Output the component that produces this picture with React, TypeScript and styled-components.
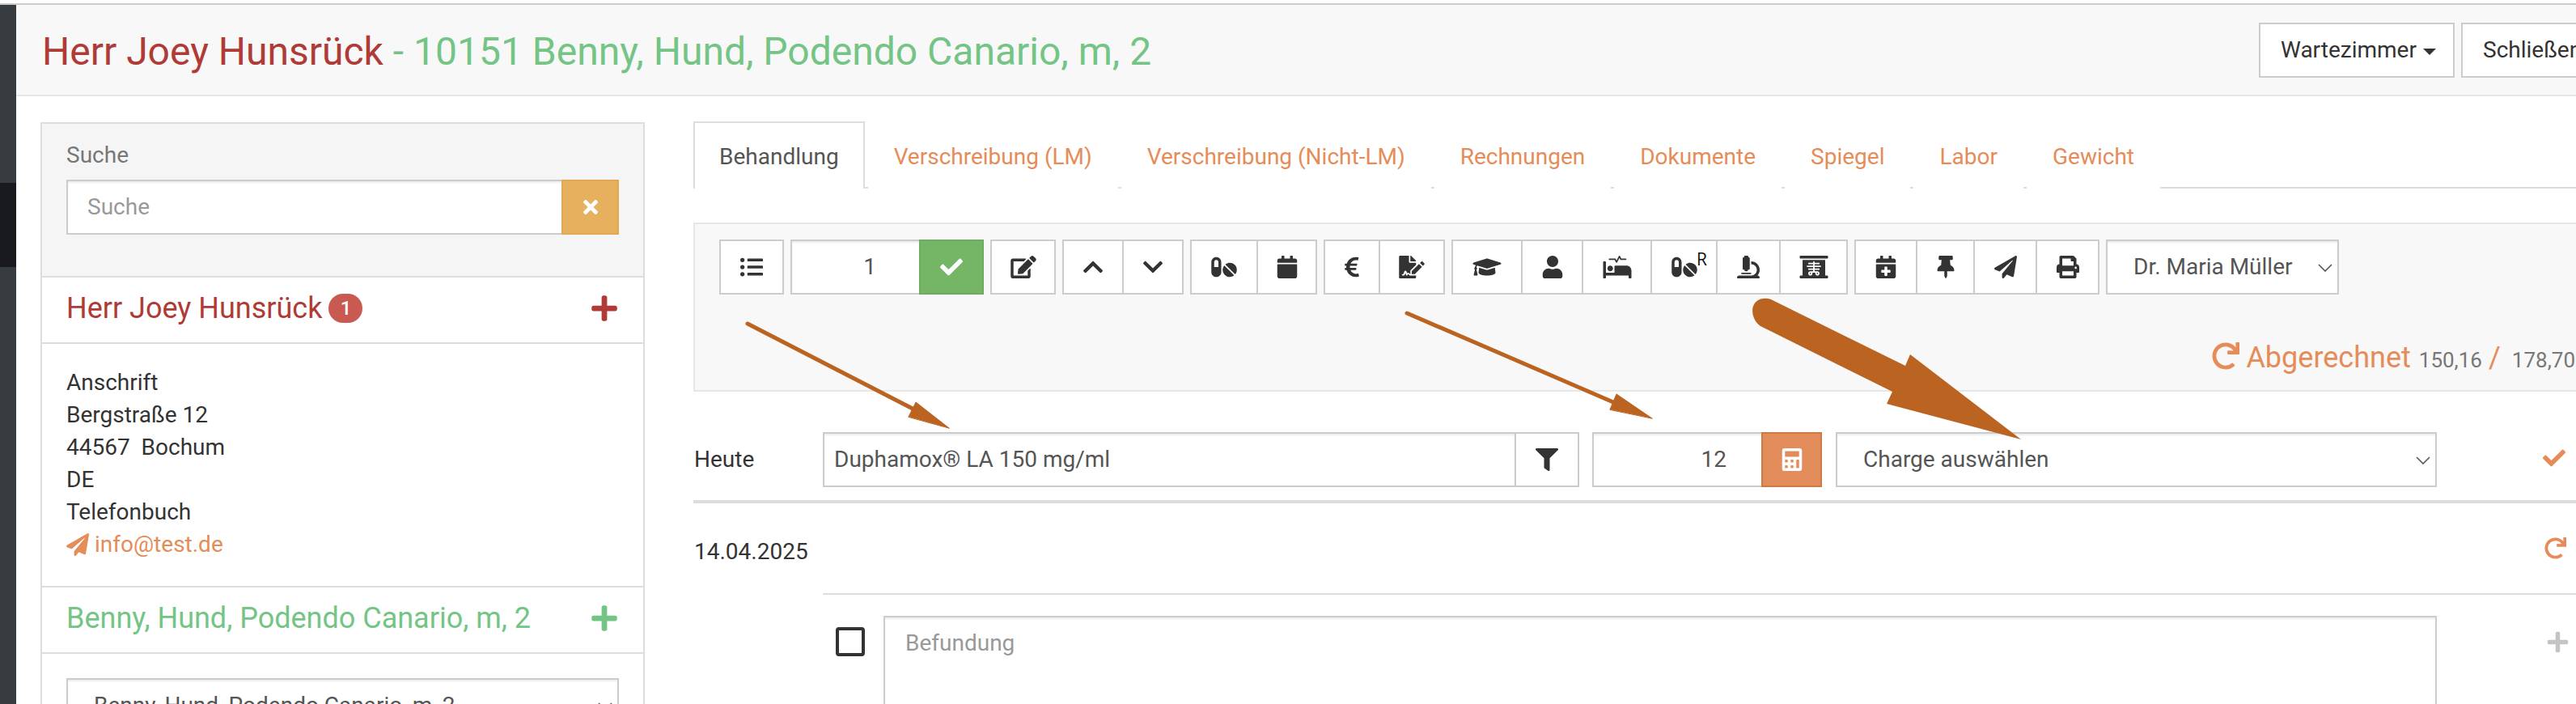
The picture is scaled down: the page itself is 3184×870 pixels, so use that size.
import styled, { createGlobalStyle } from "styled-components";
import {
  FaCalculator,
  FaCalendar,
  FaCalendarPlus,
  FaCheck,
  FaChevronDown,
  FaChevronUp,
  FaEdit,
  FaEuroSign,
  FaFileSignature,
  FaFilter,
  FaGraduationCap,
  FaListUl,
  FaMicroscope,
  FaPaperPlane,
  FaPills,
  FaPlus,
  FaPrint,
  FaProcedures,
  FaRedo,
  FaThumbtack,
  FaTimes,
  FaUser,
  FaXRay,
} from "react-icons/fa";

const ORANGE = "#e58c58";
const RED = "#b03a36";
const GREEN = "#74c585";

const GlobalStyle = createGlobalStyle`
  html, body {
    margin: 0;
    padding: 0;
    width: 3184px;
    height: 870px;
    overflow: hidden;
    background: #fff;
  }
  body {
    font-family: Roboto, "Liberation Sans", sans-serif;
    font-size: 28px;
    line-height: 40px;
    color: #333;
  }
  * {
    box-sizing: border-box;
  }
`;

const Page = styled.div`
  position: relative;
  width: 3184px;
  height: 870px;
  padding-top: 4px;
  overflow: hidden;
`;

const Frame = styled.div`
  display: flex;
  height: 866px;
  border-top: 2px solid #ccc;
`;

const Rail = styled.div`
  flex: 0 0 20px;
  display: flex;
  flex-direction: column;
  background: #363c40;
`;

const RailActive = styled.div`
  height: 104px;
  margin-top: 220px;
  background: #181a1e;
`;

const Content = styled.div`
  flex: 1;
  min-width: 0;
`;

const Header = styled.header`
  display: flex;
  justify-content: space-between;
  height: 113px;
  padding: 22px 0 0 32px;
  background: #f8f8f8;
  border-bottom: 2px solid #e7e7e7;
`;

const Title = styled.h1`
  margin: 0;
  padding-top: 5px;
  font-size: 48px;
  line-height: 62px;
  font-weight: 400;
  white-space: nowrap;
  color: ${GREEN};
`;

const TitleOwner = styled.span`
  color: ${RED};
`;

const HeaderActions = styled.div`
  display: flex;
  gap: 8px;
  flex: 0 0 392px;
  overflow: hidden;
`;

const HeaderButton = styled.div<{ $w: number }>`
  flex: 0 0 ${(p) => p.$w}px;
  height: 68px;
  display: flex;
  align-items: center;
  gap: 8px;
  padding-left: 25px;
  background: #fff;
  border: 2px solid #ccc;
  white-space: nowrap;
`;

const Caret = styled.span`
  width: 0;
  height: 0;
  margin-top: 4px;
  border-top: 8px solid #333;
  border-left: 8px solid transparent;
  border-right: 8px solid transparent;
`;

const Columns = styled.div`
  display: flex;
  padding: 32px 0 0 30px;
`;

const LeftPanel = styled.aside`
  flex: 0 0 747px;
  height: 760px;
  border: 2px solid #ddd;
`;

const SearchBox = styled.div`
  height: 190px;
  padding: 19px 30px 0;
  background: #f5f5f5;
  border-bottom: 2px solid #ddd;
`;

const SearchLabel = styled.div`
  height: 50px;
  color: #777;
`;

const InputGroup = styled.div`
  display: flex;
`;

const SearchInput = styled.div`
  flex: 1;
  height: 68px;
  padding: 12px 24px;
  color: #999;
  background: #fff;
  border: 2px solid #ccc;
  border-right: 0;
  box-shadow: inset 0 2px 2px rgba(0, 0, 0, 0.075);
`;

const SearchClear = styled.div`
  flex: 0 0 71px;
  display: flex;
  align-items: center;
  justify-content: center;
  color: #fff;
  background: #e7b05e;
  border: 2px solid #e4a854;
  svg {
    height: 26px;
    width: 36px;
  }
`;

const PanelHead = styled.div<{ $color: string }>`
  height: 82px;
  display: flex;
  align-items: center;
  justify-content: space-between;
  padding: 0 30px 4px;
  font-size: 36px;
  color: ${(p) => p.$color};
  border-bottom: 2px solid #ddd;
  svg {
    height: 36px;
    width: 36px;
  }
`;

const PanelName = styled.div`
  display: flex;
  align-items: center;
  gap: 8px;
`;

const Badge = styled.span`
  width: 42px;
  height: 36px;
  display: flex;
  align-items: center;
  justify-content: center;
  font-size: 24px;
  font-weight: 500;
  color: #fff;
  background: #c95a52;
  border-radius: 20px;
`;

const Address = styled.div`
  height: 301px;
  padding: 28px 30px 0;
  border-bottom: 2px solid #ddd;
`;

const MailLink = styled.div`
  display: flex;
  align-items: center;
  gap: 7px;
  color: ${ORANGE};
  svg {
    height: 28px;
    width: 28px;
  }
`;

const PatientBody = styled.div`
  padding: 30px 30px 0;
`;

const Select = styled.div<{ $pad?: number }>`
  flex: 1;
  position: relative;
  height: 68px;
  padding: 12px 0 0 ${(p) => p.$pad ?? 32}px;
  color: #555;
  background: #fff;
  border: 2px solid #ccc;
  box-shadow: inset 0 2px 2px rgba(0, 0, 0, 0.075);
  white-space: nowrap;
`;

const DoctorSelect = styled(Select)`
  flex: 0 0 288px;
`;

const SelectChevron = styled.svg`
  position: absolute;
  right: 6px;
  top: 28px;
  width: 18px;
  height: 10px;
  fill: none;
  stroke: #555;
  stroke-width: 1.6;
`;

const Arrow = () => (
  <SelectChevron viewBox="0 0 18 10">
    <path d="M1 1l8 8 8-8" />
  </SelectChevron>
);

const RightColumn = styled.main`
  flex: 0 0 2400px;
  margin-left: 60px;
`;

const Tabs = styled.nav`
  display: flex;
  height: 83px;
  margin-top: -1px;
  border-bottom: 2px solid #ddd;
`;

const Tab = styled.div<{ $active?: boolean }>`
  height: 83px;
  margin-right: 4px;
  padding: 22px 30px 0;
  white-space: nowrap;
  color: ${(p) => (p.$active ? "#555" : ORANGE)};
  background: #fff;
  border: 2px solid ${(p) => (p.$active ? "#ddd" : "transparent")};
  border-bottom: 0;
`;

const ToolPanel = styled.section`
  height: 209px;
  margin-top: 42px;
  padding: 19px 30px 0;
  background: #f8f8f8;
  border: 2px solid #e7e7e7;
`;

const Toolbar = styled.div`
  display: flex;
  gap: 8px;
`;

const Group = styled.div`
  display: flex;
  & > * + * {
    margin-left: -2px;
  }
`;

const ToolButton = styled.div<{ $w: number }>`
  position: relative;
  flex: 0 0 ${(p) => p.$w}px;
  height: 68px;
  display: flex;
  align-items: center;
  justify-content: center;
  color: #333;
  background: #fff;
  border: 2px solid #ccc;
  svg {
    height: 28px;
    width: 42px;
  }
`;

const FilterButton = styled(ToolButton)`
  margin-left: -2px;
`;

const Superscript = styled.span`
  position: absolute;
  left: 55px;
  top: 10px;
  font-family: "Open Sans", sans-serif;
  font-size: 21px;
  line-height: 24px;
  color: #111;
`;

const CountField = styled.div`
  flex: 0 0 161px;
  height: 68px;
  padding: 12px 53px 0 0;
  text-align: right;
  color: #555;
  background: #fff;
  border: 2px solid #ccc;
  box-shadow: inset 0 2px 2px rgba(0, 0, 0, 0.075);
`;

const ColorButton = styled.div<{ $bg: string; $line: string; $w: number }>`
  flex: 0 0 ${(p) => p.$w}px;
  height: 68px;
  display: flex;
  align-items: center;
  justify-content: center;
  color: #fff;
  background: ${(p) => p.$bg};
  border: 2px solid ${(p) => p.$line};
  svg {
    height: 28px;
    width: 42px;
  }
`;

const Amount = styled.div`
  display: flex;
  justify-content: flex-end;
  align-items: baseline;
  height: 50px;
  margin-top: 56px;
  padding-right: 42px;
  font-size: 26px;
  white-space: nowrap;
  color: #777;
`;

const AmountState = styled.span`
  display: flex;
  align-items: baseline;
  gap: 8px;
  margin-right: 10px;
  font-size: 36px;
  color: ${ORANGE};
  svg {
    height: 34px;
    width: 34px;
    transform: translateY(3px);
  }
`;

const AmountSlash = styled.span`
  margin: 0 14px 0 8px;
  font-size: 36px;
  color: ${ORANGE};
`;

const EntryRow = styled.div`
  display: flex;
  align-items: center;
  height: 68px;
  margin-top: 50px;
`;

const RowLabel = styled.div`
  flex: 0 0 160px;
  padding-left: 1px;
`;

const ProductField = styled.div`
  flex: 0 0 857px;
  height: 68px;
  padding: 12px 12px;
  color: #555;
  background: #fff;
  border: 2px solid #ccc;
  box-shadow: inset 0 2px 2px rgba(0, 0, 0, 0.075);
`;

const AmountField = styled.div`
  flex: 0 0 209px;
  height: 68px;
  margin-left: 16px;
  padding: 12px 43px 0 0;
  text-align: right;
  color: #555;
  background: #fff;
  border: 2px solid #ccc;
  border-right: 0;
  box-shadow: inset 0 2px 2px rgba(0, 0, 0, 0.075);
`;

const ChargeSlot = styled.div`
  flex: 0 0 743px;
  display: flex;
  margin-left: 17px;
`;

const RowIcon = styled.div<{ $color: string; $h: number; $left: number }>`
  margin-left: ${(p) => p.$left}px;
  color: ${(p) => p.$color};
  display: flex;
  svg {
    height: ${(p) => p.$h}px;
    width: ${(p) => p.$h}px;
  }
`;

const EntryCheck = styled(RowIcon)`
  margin-bottom: 4px;
`;

const ThickRule = styled.hr`
  height: 4px;
  margin: 16px 0 0;
  background: #ddd;
  border: 0;
`;

const DateRow = styled.div`
  display: flex;
`;

const DateBody = styled.div`
  flex: 1;
  height: 113px;
  display: flex;
  align-items: center;
  padding-left: 2128px;
  border-bottom: 2px solid #ddd;
`;

const DateLabel = styled(RowLabel)`
  padding-top: 40px;
`;

const NoteRow = styled.div`
  display: flex;
  align-items: flex-start;
  margin: 26px 0 0 160px;
`;

const CheckBox = styled.div`
  flex: 0 0 36px;
  height: 36px;
  margin: 14px 23px 0 16px;
  border: 4px solid #333;
  border-radius: 4px;
`;

const NoteArea = styled.div`
  flex: 0 0 1920px;
  height: 160px;
  padding: 12px 25px;
  color: #999;
  background: #fff;
  border: 2px solid #ccc;
  box-shadow: inset 0 2px 2px rgba(0, 0, 0, 0.075);
`;

const NotePlus = styled(RowIcon)`
  margin-top: 18px;
`;

const Annotations = styled.svg`
  position: absolute;
  left: 0;
  top: 0;
  width: 3184px;
  height: 870px;
  pointer-events: none;
`;

const tools: { w: number; icon: React.ReactNode; sup?: string }[][] = [
  [{ w: 81, icon: <FaEdit /> }],
  [
    { w: 76, icon: <FaChevronUp /> },
    { w: 76, icon: <FaChevronDown /> },
  ],
  [
    { w: 84, icon: <FaPills /> },
    { w: 75, icon: <FaCalendar /> },
  ],
  [
    { w: 70, icon: <FaEuroSign /> },
    { w: 82, icon: <FaFileSignature /> },
  ],
  [
    { w: 88, icon: <FaGraduationCap /> },
    { w: 77, icon: <FaUser /> },
    { w: 87, icon: <FaProcedures /> },
    { w: 83, icon: <FaPills />, sup: "R" },
    { w: 80, icon: <FaMicroscope /> },
    { w: 85, icon: <FaXRay /> },
  ],
  [
    { w: 78, icon: <FaCalendarPlus /> },
    { w: 73, icon: <FaThumbtack /> },
    { w: 79, icon: <FaPaperPlane /> },
    { w: 79, icon: <FaPrint /> },
  ],
];

const tabLabels = [
  "Verschreibung (LM)",
  "Verschreibung (Nicht-LM)",
  "Rechnungen",
  "Dokumente",
  "Spiegel",
  "Labor",
  "Gewicht",
];

export default function App() {
  return (
    <Page>
      <GlobalStyle />
      <Frame>
        <Rail>
          <RailActive />
        </Rail>
        <Content>
          <Header>
            <Title>
              <TitleOwner>Herr Joey Hunsrück</TitleOwner> - 10151 Benny, Hund, Podendo Canario, m, 2
            </Title>
            <HeaderActions>
              <HeaderButton $w={242}>
                Wartezimmer <Caret />
              </HeaderButton>
              <HeaderButton $w={160}>Schließen</HeaderButton>
            </HeaderActions>
          </Header>
          <Columns>
            <LeftPanel>
              <SearchBox>
                <SearchLabel>Suche</SearchLabel>
                <InputGroup>
                  <SearchInput>Suche</SearchInput>
                  <SearchClear>
                    <FaTimes />
                  </SearchClear>
                </InputGroup>
              </SearchBox>
              <PanelHead $color={RED}>
                <PanelName>
                  Herr Joey Hunsrück <Badge>1</Badge>
                </PanelName>
                <FaPlus />
              </PanelHead>
              <Address>
                <div>Anschrift</div>
                <div>Bergstraße 12</div>
                <div>44567&nbsp; Bochum</div>
                <div>DE</div>
                <div>Telefonbuch</div>
                <MailLink>
                  <FaPaperPlane /> info@test.de
                </MailLink>
              </Address>
              <PanelHead $color={GREEN}>
                Benny, Hund, Podendo Canario, m, 2
                <FaPlus />
              </PanelHead>
              <PatientBody>
                <Select>
                  Benny, Hund, Podendo Canario, m, 2
                  <Arrow />
                </Select>
              </PatientBody>
            </LeftPanel>
            <RightColumn>
              <Tabs>
                <Tab $active>Behandlung</Tab>
                {tabLabels.map((label) => (
                  <Tab key={label}>{label}</Tab>
                ))}
              </Tabs>
              <ToolPanel>
                <Toolbar>
                  <ToolButton $w={80}>
                    <FaListUl />
                  </ToolButton>
                  <Group>
                    <CountField>1</CountField>
                    <ColorButton $w={80} $bg="#74b666" $line="#6dab60">
                      <FaCheck />
                    </ColorButton>
                  </Group>
                  {tools.map((group, i) => (
                    <Group key={i}>
                      {group.map((tool, j) => (
                        <ToolButton key={j} $w={tool.w}>
                          {tool.icon}
                          {tool.sup && <Superscript>{tool.sup}</Superscript>}
                        </ToolButton>
                      ))}
                    </Group>
                  ))}
                  <DoctorSelect>
                    Dr. Maria Müller
                    <Arrow />
                  </DoctorSelect>
                </Toolbar>
                <Amount>
                  <AmountState>
                    <FaRedo />
                    Abgerechnet
                  </AmountState>
                  150,16
                  <AmountSlash>/</AmountSlash>
                  178,70
                </Amount>
              </ToolPanel>
              <EntryRow>
                <RowLabel>Heute</RowLabel>
                <ProductField>Duphamox® LA 150 mg/ml</ProductField>
                <FilterButton $w={80}>
                  <FaFilter />
                </FilterButton>
                <AmountField>12</AmountField>
                <ColorButton $w={75} $bg="#e38c5b" $line="#cf7a45">
                  <FaCalculator />
                </ColorButton>
                <ChargeSlot>
                  <Select>
                    Charge auswählen
                    <Arrow />
                  </Select>
                </ChargeSlot>
                <EntryCheck $color={ORANGE} $h={28} $left={131}>
                  <FaCheck />
                </EntryCheck>
              </EntryRow>
              <ThickRule />
              <DateRow>
                <DateLabel>14.04.2025</DateLabel>
                <DateBody>
                  <RowIcon $color={ORANGE} $h={27} $left={0}>
                    <FaRedo />
                  </RowIcon>
                </DateBody>
              </DateRow>
              <NoteRow>
                <CheckBox />
                <NoteArea>Befundung</NoteArea>
                <NotePlus $color="#c4c4c4" $h={29} $left={135}>
                  <FaPlus />
                </NotePlus>
              </NoteRow>
            </RightColumn>
          </Columns>
        </Content>
      </Frame>
      <Annotations viewBox="0 0 3184 870">
        <g fill="#bb6321" stroke="#bb6321" strokeLinecap="round">
          <path d="M924 400L1128 505" strokeWidth="5" />
          <path d="M1173 529L1132 497L1123 515Z" strokeWidth="1" />
          <path d="M1739 387L1994 497" strokeWidth="5" />
          <path d="M2042 517L1998 487L1990 506Z" strokeWidth="1" />
          <path
            d="M2191 371L2355 452L2361 438L2498 543L2332 499L2339 484L2176 403C2165 395 2162 378 2173 371C2178 368 2186 368 2191 371Z"
            strokeWidth="0"
          />
        </g>
      </Annotations>
    </Page>
  );
}
